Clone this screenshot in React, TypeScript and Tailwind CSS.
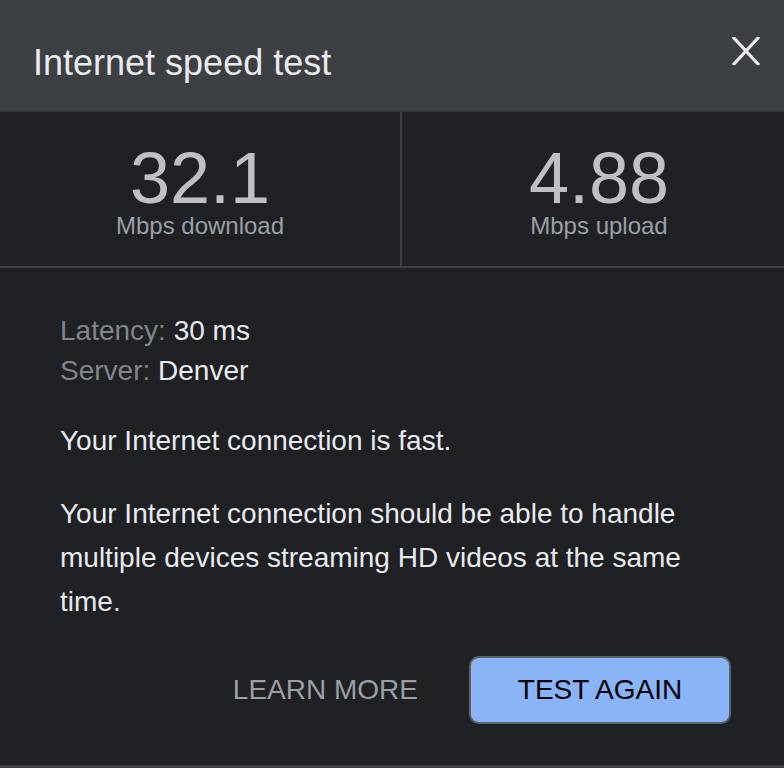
import React from "react";

const font = { fontFamily: '"Liberation Sans", Arial, Helvetica, sans-serif' };

function CloseIcon() {
    return (
        <svg width="28" height="28" viewBox="0 0 28 28" fill="none">
            <path d="M2 1 L26 27 M26 1 L2 27" stroke="#e8eaed" strokeWidth="3.2" strokeLinecap="square" />
        </svg>
    );
}

function Stat({ value, label }: { value: string; label: string }) {
    return (
        <div className="flex flex-col items-center pt-[30px] pb-[28px]">
            <div className="text-[72px] leading-[72px] text-[#bdc1c6]">{value}</div>
            <div className="text-[24px] leading-[24px] text-[#9aa0a6]">{label}</div>
        </div>
    );
}

export default function App() {
    return (
        <div className="w-[784px] h-[768px] bg-[#202124] flex flex-col overflow-hidden" style={font}>
            {/* header */}
            <div className="h-[110px] bg-[#3c4043] flex justify-between items-start shrink-0">
                <div className="pl-[33px] pt-[45px] text-[36px] leading-[36px] text-[#e8eaed]">
                    Internet speed test
                </div>
                <button className="mt-[37px] mr-[24px]">
                    <CloseIcon />
                </button>
            </div>
            <div className="h-[2px] bg-[#35363a] shrink-0"></div>

            {/* results */}
            <div className="flex border-b-2 border-[#3c4043] shrink-0">
                <div className="w-[400px]">
                    <Stat value="32.1" label="Mbps download" />
                </div>
                <div className="w-[2px] bg-[#3c4043]"></div>
                <div className="flex-1 pl-[12px]">
                    <Stat value="4.88" label="Mbps upload" />
                </div>
            </div>

            {/* details */}
            <div className="flex-1 flex flex-col pl-[60px] pr-[53px] pt-[43px] text-[28px] text-[#e8eaed]">
                <div className="leading-[40px]">
                    <div>
                        <span className="text-[#80868b]">Latency: </span>30 ms
                    </div>
                    <div>
                        <span className="text-[#80868b]">Server: </span>Denver
                    </div>
                </div>
                <p className="mt-[28px] leading-[44px]">Your Internet connection is fast.</p>
                <p className="mt-[29px] leading-[44px] pr-[40px]">
                    Your Internet connection should be able to handle multiple devices streaming HD videos at the same time.
                </p>
                <div className="mt-[32px] flex justify-end items-center gap-[51px]">
                    <button className="text-[28px] text-[#9aa0a6]">LEARN MORE</button>
                    <button className="w-[262px] h-[68px] rounded-[10px] border-2 border-[#5f6368] bg-[#8ab4f8] text-[28px] text-black">
                        TEST AGAIN
                    </button>
                </div>
            </div>
            <div className="h-[3px] bg-[#3c4043] shrink-0"></div>
        </div>
    );
}
